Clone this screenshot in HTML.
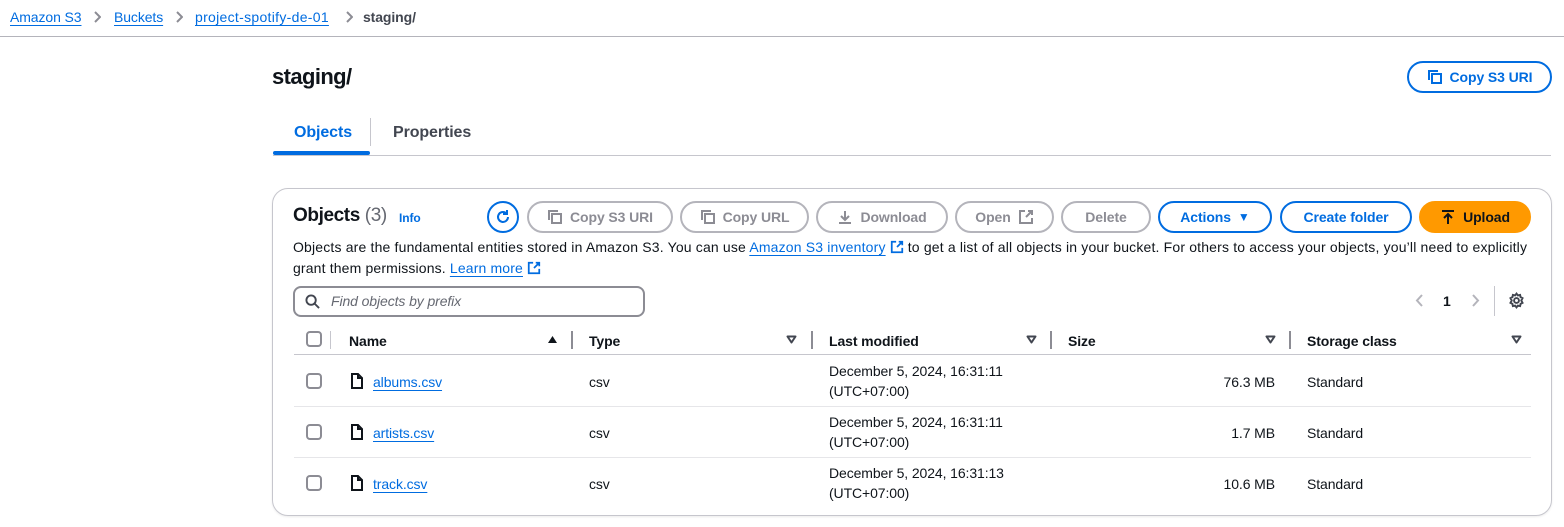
<!DOCTYPE html>
<html><head><meta charset="utf-8"><style>
*{box-sizing:border-box;margin:0;padding:0}
body{width:1564px;height:527px;background:#fff;font-family:"Liberation Sans",sans-serif;color:#0f141a;font-size:14px;position:relative;overflow:hidden;letter-spacing:-0.1px}
.a{position:absolute;white-space:nowrap}
.lk{color:#006ce0;text-decoration:underline;text-underline-offset:3px}
.btn{position:absolute;height:32px;border-radius:16px;border:2px solid #b4b4bb;color:#8c8c94;font-weight:bold;font-size:14px;display:flex;align-items:center;justify-content:center;gap:7px}
.pri{border-color:#006ce0;color:#006ce0}
.cb{position:absolute;width:16px;height:16px;border:2px solid #8c8c94;border-radius:4px}
.sep{position:absolute;width:2px;height:18px;background:#8c8c94;top:331px}
.hd{position:absolute;top:333px;font-weight:bold}
.row{position:absolute;left:294px;width:1237px;height:1px;background:#e6e6e9}
.chev{position:absolute;top:11px}
.srt{position:absolute;top:335px}
svg{display:block}
</style></head><body>
<div class="a" style="left:10px;top:9px"><span class="lk">Amazon S3</span></div>
<svg class="chev" style="left:93px" width="8" height="12" viewBox="0 0 8 12" fill="none" stroke="#8c8c94" stroke-width="2"><path d="M2 1l5 5-5 5"/></svg>
<div class="a" style="left:114px;top:9px"><span class="lk">Buckets</span></div>
<svg class="chev" style="left:175px" width="8" height="12" viewBox="0 0 8 12" fill="none" stroke="#8c8c94" stroke-width="2"><path d="M2 1l5 5-5 5"/></svg>
<div class="a" style="left:195px;top:9px;letter-spacing:0.3px"><span class="lk">project-spotify-de-01</span></div>
<svg class="chev" style="left:345px" width="8" height="12" viewBox="0 0 8 12" fill="none" stroke="#8c8c94" stroke-width="2"><path d="M2 1l5 5-5 5"/></svg>
<div class="a" style="left:363px;top:9px;color:#424650;font-weight:bold">staging/</div>
<div class="a" style="left:0;top:36px;width:1564px;height:1px;background:#b4b4bb"></div>

<div class="a" style="left:272px;top:64px;font-size:22px;font-weight:bold;letter-spacing:-0.6px">staging/</div>
<div class="btn pri" style="left:1407px;top:61px;width:145px;">
<svg width="16" height="16" viewBox="0 0 16 16" fill="none" stroke="#006ce0" stroke-width="2"><rect x="5" y="5" width="9" height="9"/><path d="M2 11V2h9"/></svg>Copy S3 URI</div>

<div class="a" style="left:294px;top:124px;font-weight:bold;font-size:16px;color:#006ce0">Objects</div>
<div class="a" style="left:370px;top:118px;width:1px;height:28px;background:#c6c6cd"></div>
<div class="a" style="left:393px;top:124px;font-weight:bold;font-size:16px;color:#424650">Properties</div>
<div class="a" style="left:273px;top:151px;width:97px;height:4px;border-radius:2px;background:#006ce0"></div>
<div class="a" style="left:273px;top:155px;width:1278px;height:1px;background:#c6c6cd"></div>

<div class="a" style="left:272px;top:188px;width:1280px;height:328px;border:1px solid #c6c6cd;border-radius:16px;box-shadow:0 1px 2px rgba(0,0,0,.08)"></div>

<div class="a" style="left:293px;top:205px;font-size:19px;font-weight:bold;letter-spacing:-0.4px">Objects <span style="font-weight:normal;color:#656871">(3)</span></div>
<div class="a" style="left:399px;top:211px;font-size:12px;font-weight:bold;color:#006ce0">Info</div>

<div class="a" style="left:487px;top:201px;width:32px;height:32px;border:2px solid #006ce0;border-radius:16px;display:flex;align-items:center;justify-content:center">
<svg width="16" height="16" viewBox="0 0 16 16" fill="none" stroke="#006ce0" stroke-width="2"><path d="M13 8a5 5 0 1 1-2-4"/><path d="M12 1v4H8"/></svg></div>
<div class="btn" style="left:527px;top:201px;width:146px"><svg width="16" height="16" viewBox="0 0 16 16" fill="none" stroke="#8c8c94" stroke-width="2"><rect x="5" y="5" width="9" height="9"/><path d="M2 11V2h9"/></svg>Copy S3 URI</div>
<div class="btn" style="left:680px;top:201px;width:129px"><svg width="16" height="16" viewBox="0 0 16 16" fill="none" stroke="#8c8c94" stroke-width="2"><rect x="5" y="5" width="9" height="9"/><path d="M2 11V2h9"/></svg>Copy URL</div>
<div class="btn" style="left:816px;top:201px;width:132px"><svg width="16" height="16" viewBox="0 0 16 16" fill="none" stroke="#8c8c94" stroke-width="2"><path d="M8 2v9M4 7l4 4 4-4M2 14h12"/></svg>Download</div>
<div class="btn" style="left:955px;top:201px;width:99px">Open <svg width="16" height="16" viewBox="0 0 16 16" fill="none" stroke="#8c8c94" stroke-width="2"><path d="M7 2H2v12h12V9M10 2h4v4M14 2L8 8"/></svg></div>
<div class="btn" style="left:1061px;top:201px;width:90px">Delete</div>
<div class="btn pri" style="left:1158px;top:201px;width:114px">Actions <span style="font-size:12px">&#9660;</span></div>
<div class="btn pri" style="left:1280px;top:201px;width:132px">Create folder</div>
<div class="btn" style="left:1419px;top:201px;width:112px;background:#ff9900;border-color:#ff9900;color:#0f141a"><svg width="16" height="16" viewBox="0 0 16 16" fill="none" stroke="#0f141a" stroke-width="2"><path d="M2 2h12M8 5v10M4 9l4-4 4 4"/></svg>Upload</div>

<div class="a" style="left:293px;top:239px;letter-spacing:0.17px">Objects are the fundamental entities stored in Amazon S3. You can use <span class="lk">Amazon S3 inventory</span> <svg style="display:inline-block;vertical-align:-2px" width="14" height="14" viewBox="0 0 16 16" fill="none" stroke="#006ce0" stroke-width="2"><path d="M7 2H2v12h12V9M10 2h4v4M14 2L8 8"/></svg> to get a list of all objects in your bucket. For others to access your objects, you’ll need to explicitly</div>
<div class="a" style="left:293px;top:260px;letter-spacing:0.15px">grant them permissions. <span class="lk">Learn more</span> <svg style="display:inline-block;vertical-align:-2px" width="14" height="14" viewBox="0 0 16 16" fill="none" stroke="#006ce0" stroke-width="2"><path d="M7 2H2v12h12V9M10 2h4v4M14 2L8 8"/></svg></div>

<div class="a" style="left:293px;top:286px;width:352px;height:31px;border:2px solid #8c8c94;border-radius:8px"></div>
<svg class="a" style="left:305px;top:294px" width="15" height="15" viewBox="0 0 16 16" fill="none" stroke="#424650" stroke-width="2"><circle cx="6.5" cy="6.5" r="5"/><path d="M10 10l5 5"/></svg>
<div class="a" style="left:331px;top:293px;font-style:italic;color:#656871">Find objects by prefix</div>

<svg class="a" style="left:1415px;top:294px" width="8" height="13" viewBox="0 0 8 13" fill="none" stroke="#b4b4bb" stroke-width="2"><path d="M7 1L2 6.5 7 12"/></svg>
<div class="a" style="left:1443px;top:293px;font-weight:bold">1</div>
<svg class="a" style="left:1472px;top:294px" width="8" height="13" viewBox="0 0 8 13" fill="none" stroke="#b4b4bb" stroke-width="2"><path d="M1 1l5 5.5L1 12"/></svg>
<div class="a" style="left:1494px;top:286px;width:1px;height:30px;background:#c6c6cd"></div>
<svg class="a" style="left:1508px;top:292px" width="17" height="17" viewBox="0 0 16 16" fill="none" stroke="#424650" stroke-width="1.8"><circle cx="8" cy="8" r="2.3"/><path d="M8 1.5l1.3 1.7 2.1-.5.4 2.1 1.9 1L12.5 8l1.2 2.2-1.9 1-.4 2.1-2.1-.5L8 14.5l-1.3-1.7-2.1.5-.4-2.1-1.9-1L3.5 8 2.3 5.8l1.9-1 .4-2.1 2.1.5z"/></svg>

<div class="cb" style="left:306px;top:331px"></div>
<div class="a" style="left:330px;top:331px;width:1px;height:18px;background:#c6c6cd"></div>
<div class="hd" style="left:349px">Name</div>
<svg class="srt" style="left:547px" width="11" height="9" viewBox="0 0 11 9"><path d="M5.5 1L10 8H1z" fill="#0f141a"/></svg>
<div class="sep" style="left:571px"></div>
<div class="hd" style="left:589px">Type</div>
<svg class="srt" style="left:786px" width="11" height="9" viewBox="0 0 11 9"><path d="M1.5 1.5h8L5.5 7.5z" fill="none" stroke="#424650" stroke-width="2" stroke-linejoin="round"/></svg>
<div class="sep" style="left:811px"></div>
<div class="hd" style="left:829px">Last modified</div>
<svg class="srt" style="left:1026px" width="11" height="9" viewBox="0 0 11 9"><path d="M1.5 1.5h8L5.5 7.5z" fill="none" stroke="#424650" stroke-width="2" stroke-linejoin="round"/></svg>
<div class="sep" style="left:1050px"></div>
<div class="hd" style="left:1068px">Size</div>
<svg class="srt" style="left:1265px" width="11" height="9" viewBox="0 0 11 9"><path d="M1.5 1.5h8L5.5 7.5z" fill="none" stroke="#424650" stroke-width="2" stroke-linejoin="round"/></svg>
<div class="sep" style="left:1289px"></div>
<div class="hd" style="left:1307px">Storage class</div>
<svg class="srt" style="left:1511px" width="11" height="9" viewBox="0 0 11 9"><path d="M1.5 1.5h8L5.5 7.5z" fill="none" stroke="#424650" stroke-width="2" stroke-linejoin="round"/></svg>
<div class="row" style="top:354px;background:#c6c6cd"></div>

<div class="cb" style="left:306px;top:373px"></div>
<svg class="a" style="left:350px;top:373px" width="14" height="16" viewBox="0 0 14 16" fill="none" stroke="#0f141a" stroke-width="2"><path d="M2 1h6l4 4v10H2zM8 1v4h4"/></svg>
<div class="a" style="left:373px;top:374px"><span class="lk">albums.csv</span></div>
<div class="a" style="left:589px;top:374px">csv</div>
<div class="a" style="left:829px;top:361px;line-height:20px">December 5, 2024, 16:31:11<br>(UTC+07:00)</div>
<div class="a" style="left:1200px;width:75px;text-align:right;top:374px">76.3 MB</div>
<div class="a" style="left:1307px;top:374px">Standard</div>
<div class="row" style="top:406px"></div>

<div class="cb" style="left:306px;top:424px"></div>
<svg class="a" style="left:350px;top:424px" width="14" height="16" viewBox="0 0 14 16" fill="none" stroke="#0f141a" stroke-width="2"><path d="M2 1h6l4 4v10H2zM8 1v4h4"/></svg>
<div class="a" style="left:373px;top:425px"><span class="lk">artists.csv</span></div>
<div class="a" style="left:589px;top:425px">csv</div>
<div class="a" style="left:829px;top:412px;line-height:20px">December 5, 2024, 16:31:11<br>(UTC+07:00)</div>
<div class="a" style="left:1200px;width:75px;text-align:right;top:425px">1.7 MB</div>
<div class="a" style="left:1307px;top:425px">Standard</div>
<div class="row" style="top:457px"></div>

<div class="cb" style="left:306px;top:475px"></div>
<svg class="a" style="left:350px;top:475px" width="14" height="16" viewBox="0 0 14 16" fill="none" stroke="#0f141a" stroke-width="2"><path d="M2 1h6l4 4v10H2zM8 1v4h4"/></svg>
<div class="a" style="left:373px;top:476px"><span class="lk">track.csv</span></div>
<div class="a" style="left:589px;top:476px">csv</div>
<div class="a" style="left:829px;top:463px;line-height:20px">December 5, 2024, 16:31:13<br>(UTC+07:00)</div>
<div class="a" style="left:1200px;width:75px;text-align:right;top:476px">10.6 MB</div>
<div class="a" style="left:1307px;top:476px">Standard</div>
</body></html>
